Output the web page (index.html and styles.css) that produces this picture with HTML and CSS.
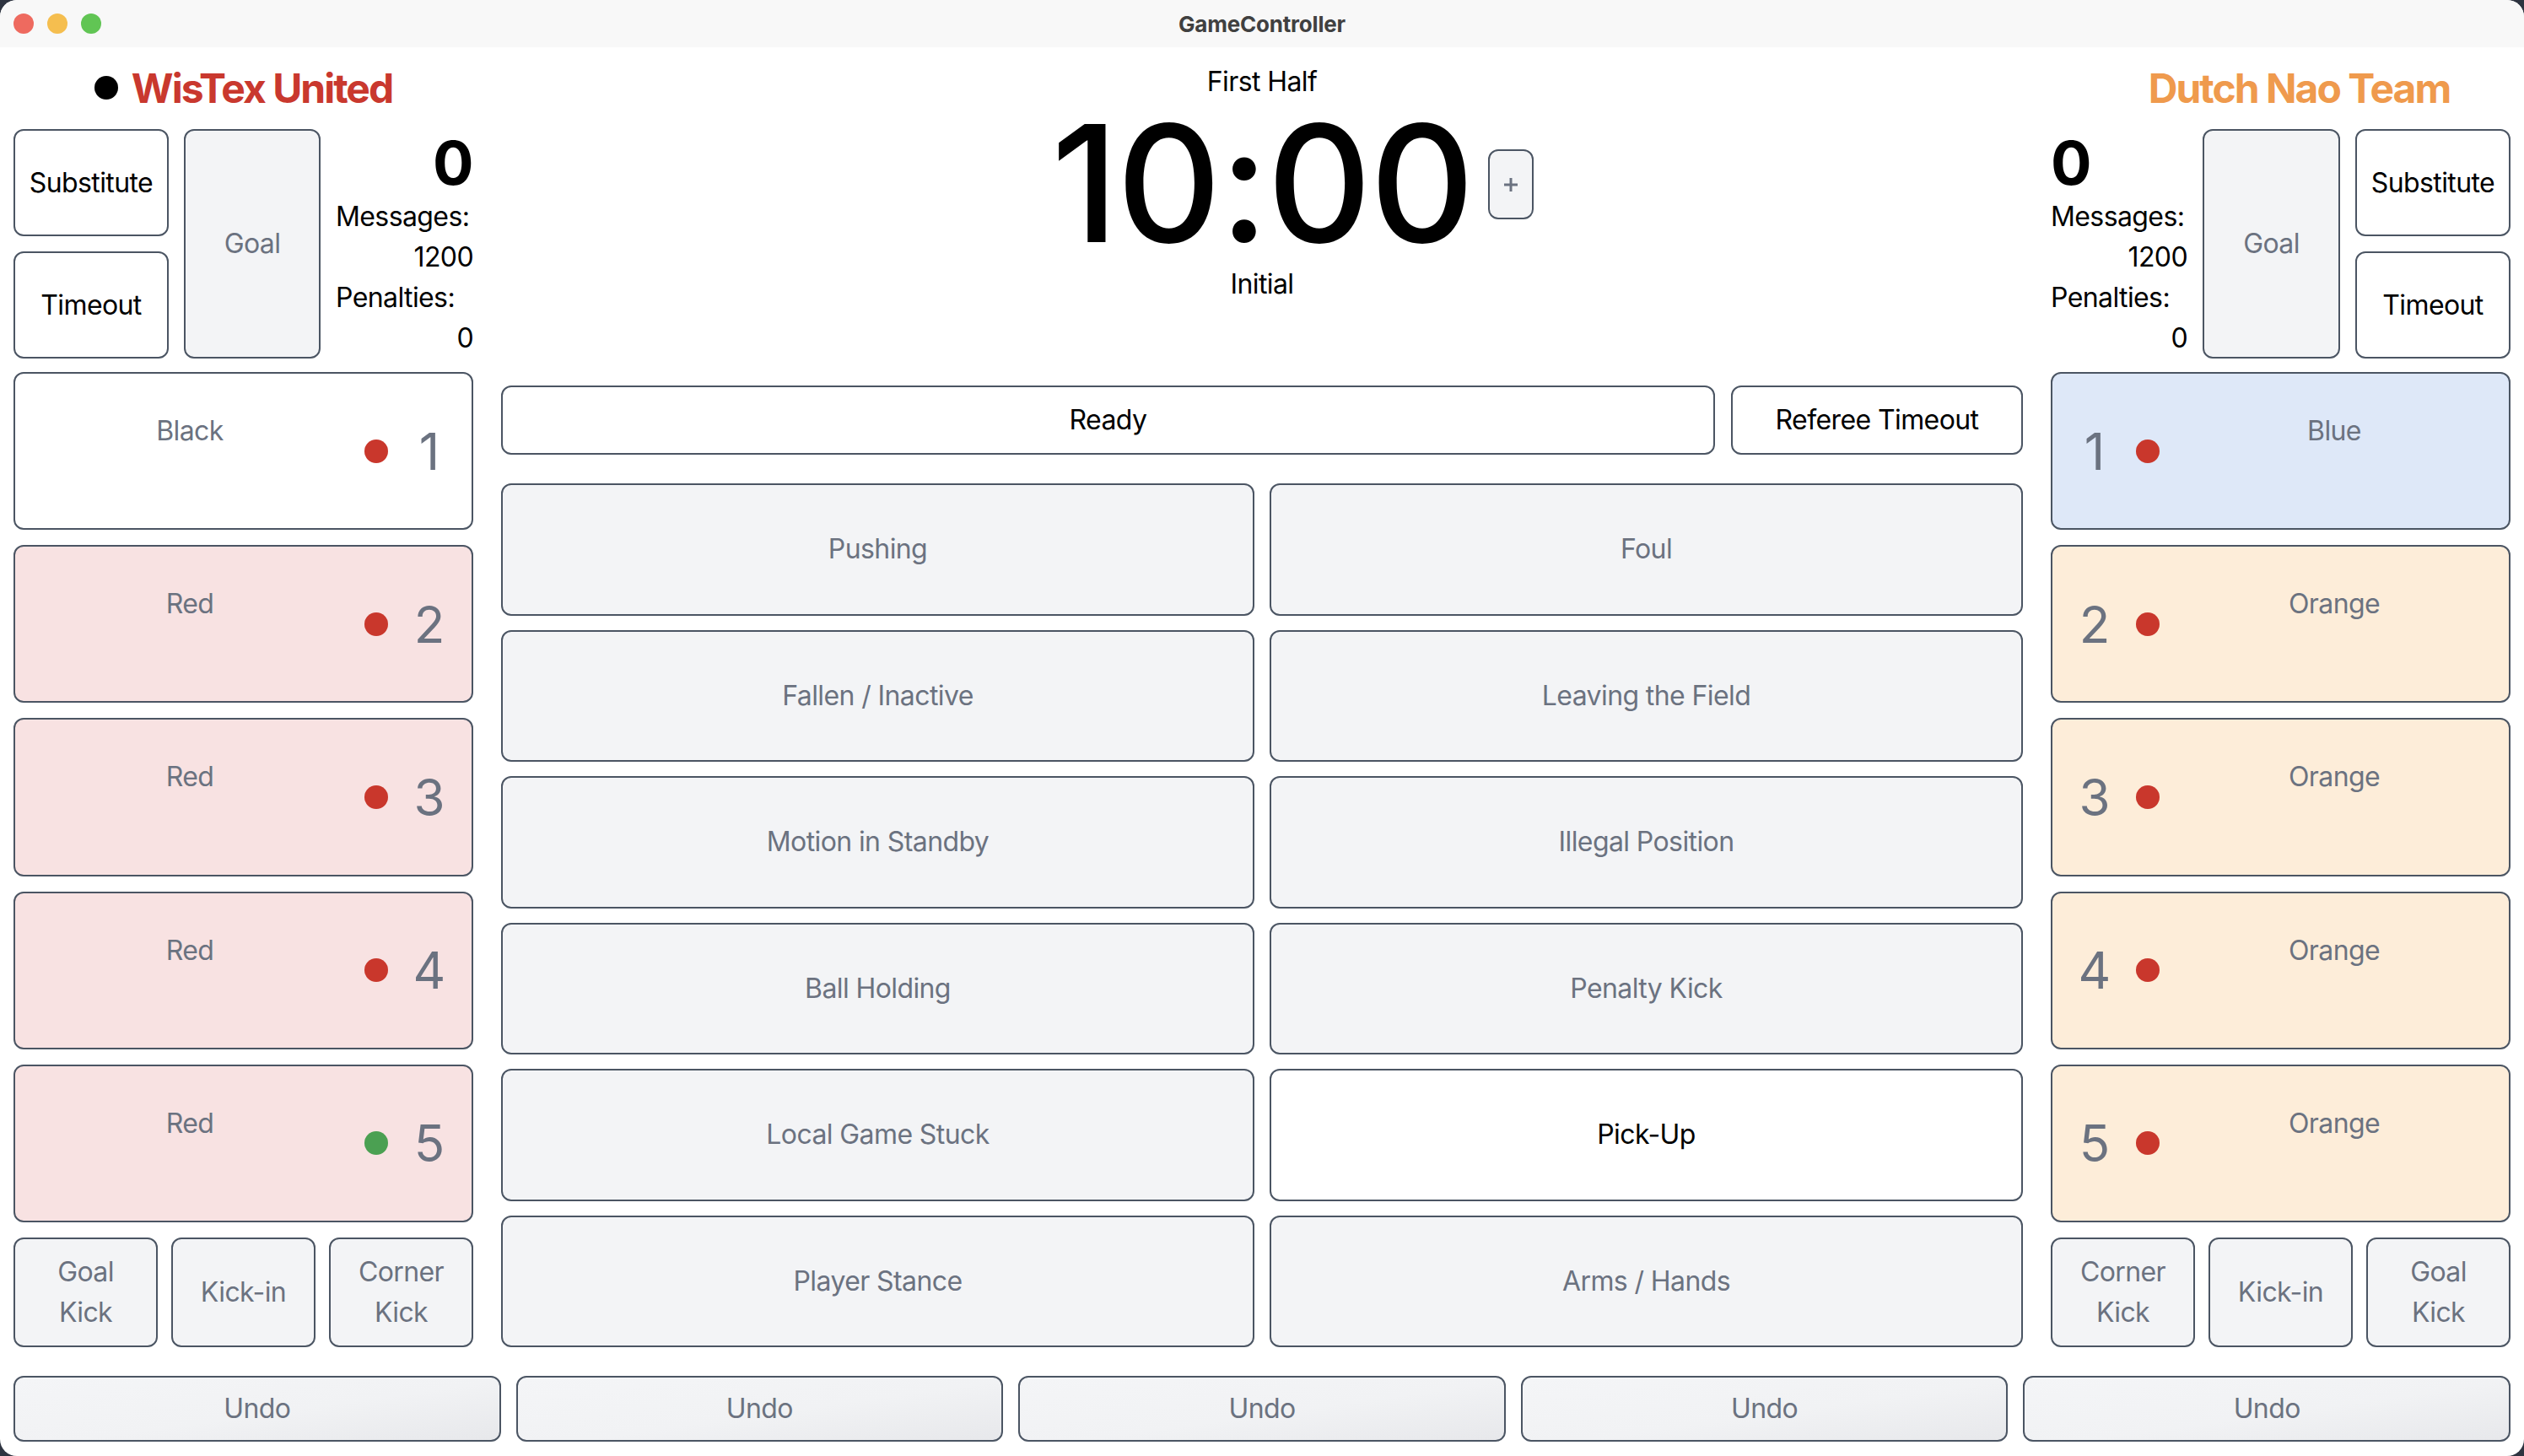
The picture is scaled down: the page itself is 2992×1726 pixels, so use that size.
FILE: index.html
```html
<!DOCTYPE html>
<html lang="en">
<head>
<meta charset="utf-8">
<title>GameController</title>
<link rel="stylesheet" href="styles.css">
</head>
<body>
<div class="window">
  <header class="titlebar">
    <div class="lights">
      <span class="light light-red"></span>
      <span class="light light-yellow"></span>
      <span class="light light-green"></span>
    </div>
    <div class="title">GameController</div>
    <div></div>
  </header>

  <main class="main">
    <div class="columns">
      <!-- Left team -->
      <section class="side side-left">
        <div class="team-name">
          <span class="kick-dot"></span>
          <span class="team-red">WisTex United</span>
        </div>
        <div class="team-head">
          <div class="stack">
            <button class="btn on">Substitute</button>
            <button class="btn on">Timeout</button>
          </div>
          <button class="btn">Goal</button>
          <div class="stats">
            <div class="score">0</div>
            <div>Messages:</div>
            <div class="val">1200</div>
            <div>Penalties:</div>
            <div class="val">0</div>
          </div>
        </div>
        <button class="card card-white"><span class="pname">Black</span><span class="pdot dot-red"></span><span class="pnum">1</span></button>
        <button class="card card-red"><span class="pname">Red</span><span class="pdot dot-red"></span><span class="pnum">2</span></button>
        <button class="card card-red"><span class="pname">Red</span><span class="pdot dot-red"></span><span class="pnum">3</span></button>
        <button class="card card-red"><span class="pname">Red</span><span class="pdot dot-red"></span><span class="pnum">4</span></button>
        <button class="card card-red"><span class="pname">Red</span><span class="pdot dot-green"></span><span class="pnum">5</span></button>
        <div class="kicks">
          <button class="btn">Goal Kick</button>
          <button class="btn">Kick-in</button>
          <button class="btn">Corner Kick</button>
        </div>
      </section>

      <!-- Center -->
      <section class="center">
        <div class="center-head">
          <div class="half">First Half</div>
          <div class="clock">10:00<button class="plus" aria-label="add time"><svg width="20" height="20" viewBox="0 0 20 20"><path d="M10 2v16M2 10h16" stroke="#6b7280" stroke-width="3" fill="none"/></svg></button></div>
          <div class="state">Initial</div>
        </div>
        <div class="ready-row">
          <button class="btn on ready">Ready</button>
          <button class="btn on ref-timeout">Referee Timeout</button>
        </div>
        <div class="fouls">
          <button class="btn">Pushing</button>
          <button class="btn">Foul</button>
          <button class="btn">Fallen / Inactive</button>
          <button class="btn">Leaving the Field</button>
          <button class="btn">Motion in Standby</button>
          <button class="btn">Illegal Position</button>
          <button class="btn">Ball Holding</button>
          <button class="btn">Penalty Kick</button>
          <button class="btn">Local Game Stuck</button>
          <button class="btn on">Pick-Up</button>
          <button class="btn">Player Stance</button>
          <button class="btn">Arms / Hands</button>
        </div>
      </section>

      <!-- Right team -->
      <section class="side side-right">
        <div class="team-name">
          <span class="kick-dot hidden"></span>
          <span class="team-orange">Dutch Nao Team</span>
        </div>
        <div class="team-head">
          <div class="stats">
            <div class="score">0</div>
            <div>Messages:</div>
            <div class="val">1200</div>
            <div>Penalties:</div>
            <div class="val">0</div>
          </div>
          <button class="btn">Goal</button>
          <div class="stack">
            <button class="btn on">Substitute</button>
            <button class="btn on">Timeout</button>
          </div>
        </div>
        <button class="card card-blue"><span class="pname">Blue</span><span class="pdot dot-red"></span><span class="pnum">1</span></button>
        <button class="card card-orange"><span class="pname">Orange</span><span class="pdot dot-red"></span><span class="pnum">2</span></button>
        <button class="card card-orange"><span class="pname">Orange</span><span class="pdot dot-red"></span><span class="pnum">3</span></button>
        <button class="card card-orange"><span class="pname">Orange</span><span class="pdot dot-red"></span><span class="pnum">4</span></button>
        <button class="card card-orange"><span class="pname">Orange</span><span class="pdot dot-red"></span><span class="pnum">5</span></button>
        <div class="kicks">
          <button class="btn">Corner Kick</button>
          <button class="btn">Kick-in</button>
          <button class="btn">Goal Kick</button>
        </div>
      </section>
    </div>

    <div class="undo-row">
      <button class="btn undo">Undo</button>
      <button class="btn undo">Undo</button>
      <button class="btn undo">Undo</button>
      <button class="btn undo">Undo</button>
      <button class="btn undo">Undo</button>
    </div>
  </main>
</div>
</body>
</html>
```

FILE: styles.css
```css
* {
  box-sizing: border-box;
  margin: 0;
  padding: 0;
}

html, body {
  width: 2992px;
  height: 1726px;
  overflow: hidden;
}

body {
  background: #2e3440;
  font-family: Inter, "Noto Sans", sans-serif;
  color: #000;
  letter-spacing: -0.6px;
}

.window {
  width: 2992px;
  height: 1726px;
  background: #fff;
  border-radius: 20px;
  overflow: hidden;
  display: flex;
  flex-direction: column;
}

/* Title bar */
.titlebar {
  flex: none;
  height: 56px;
  background: #f8f8f8;
  display: grid;
  grid-template-columns: 1fr auto 1fr;
  align-items: center;
  padding: 0 16px;
}

.lights {
  display: flex;
  gap: 16px;
}

.light {
  width: 24px;
  height: 24px;
  border-radius: 50%;
}

.light-red { background: #ee6a5f; }
.light-yellow { background: #f5be4f; }
.light-green { background: #61c554; }

.title {
  font-size: 26px;
  font-weight: 700;
  color: #404040;
  letter-spacing: -0.2px;
}

/* Main area */
.main {
  flex: 1;
  min-height: 0;
  padding: 17px 16px 17px;
  display: flex;
  flex-direction: column;
  gap: 34px;
}

.columns {
  flex: 1;
  min-height: 0;
  display: flex;
  gap: 33px;
}

.side {
  flex: none;
  width: 545px;
  display: flex;
  flex-direction: column;
  gap: 18px;
}

.center {
  flex: 1;
  min-width: 0;
  display: flex;
  flex-direction: column;
}

/* Buttons */
button {
  font-family: inherit;
  letter-spacing: inherit;
}

.btn {
  font-size: 32px;
  line-height: 48px;
  border: 2px solid #4b5563;
  border-radius: 12px;
  background: #f3f4f6;
  color: #6b7280;
  display: flex;
  align-items: center;
  justify-content: center;
  text-align: center;
}

.btn.on {
  background: #fff;
  color: #000;
}

/* Team name */
.team-name {
  flex: none;
  height: 62px;
  display: flex;
  align-items: center;
  justify-content: center;
  gap: 16px;
  font-size: 48px;
  font-weight: 700;
  letter-spacing: -2px;
}

.kick-dot {
  width: 28px;
  height: 28px;
  border-radius: 50%;
  background: #000;
}

.kick-dot.hidden {
  visibility: hidden;
}

.team-red { color: #c9382e; }
.team-orange { color: #ef9a4d; }

/* Team head */
.team-head {
  flex: none;
  height: 270px;
  display: grid;
  gap: 18px;
}

.side-left .team-head {
  grid-template-columns: 184px 162px 1fr;
}

.side-right .team-head {
  grid-template-columns: 1fr 163px 184px;
}

.stack {
  display: grid;
  grid-template-rows: 1fr 1fr;
  gap: 18px;
}

.stats {
  display: flex;
  flex-direction: column;
  font-size: 32px;
  line-height: 48px;
}

.score {
  font-size: 72px;
  line-height: 80px;
  font-weight: 700;
}

.side-left .score { text-align: right; }
.side-right .score { text-align: left; }

.val {
  text-align: right;
}

/* Player cards */
.card {
  flex: 1;
  min-height: 0;
  display: flex;
  align-items: center;
  border: 2px solid #4b5563;
  border-radius: 12px;
  padding: 0 25px 0 0;
  background: #fff;
}

.side-right .card {
  flex-direction: row-reverse;
  padding: 0 0 0 25px;
}

.card-white { background: #fff; }
.card-red { background: #f8e2e2; }
.card-blue { background: #dee8f8; }
.card-orange { background: #fdedd9; }

.pname {
  flex: 1;
  align-self: flex-start;
  padding-top: 44px;
  text-align: center;
  font-size: 32px;
  line-height: 48px;
  color: #6b7280;
}

.pdot {
  flex: none;
  width: 28px;
  height: 28px;
  border-radius: 50%;
  margin-right: 24px;
}

.side-right .pdot {
  margin-right: 0;
  margin-left: 24px;
}

.dot-red { background: #c9372c; }
.dot-green { background: #4ba052; }

.pnum {
  flex: none;
  width: 50px;
  text-align: center;
  font-size: 60px;
  line-height: 1;
  color: #6b7280;
  letter-spacing: 0;
}

/* Set-play buttons */
.kicks {
  flex: none;
  height: 130px;
  display: grid;
  grid-template-columns: repeat(3, 1fr);
  gap: 16px;
}

.kicks .btn {
  padding: 0 20px;
}

/* Center header */
.center-head {
  flex: none;
  height: 384px;
  display: flex;
  flex-direction: column;
  align-items: center;
}

.half {
  font-size: 32px;
  line-height: 48px;
}

.clock {
  position: relative;
  font-size: 192px;
  line-height: 192px;
  font-weight: 500;
  letter-spacing: -2px;
}

.plus {
  position: absolute;
  left: calc(100% + 18px);
  top: 56px;
  width: 54px;
  height: 83px;
  border: 2px solid #4b5563;
  border-radius: 12px;
  background: #f3f4f6;
  display: flex;
  align-items: center;
  justify-content: center;
}

.state {
  font-size: 32px;
  line-height: 48px;
}

/* Ready row */
.ready-row {
  flex: none;
  height: 82px;
  display: flex;
  gap: 19px;
}

.ready {
  flex: 1;
}

.ref-timeout {
  flex: none;
  width: 346px;
}

/* Foul grid */
.fouls {
  flex: 1;
  min-height: 0;
  margin-top: 34px;
  display: grid;
  grid-template-columns: 1fr 1fr;
  grid-template-rows: repeat(6, 1fr);
  column-gap: 18px;
  row-gap: 17px;
}

/* Undo row */
.undo-row {
  flex: none;
  height: 78px;
  display: grid;
  grid-template-columns: repeat(5, 1fr);
  gap: 18px;
}

.btn.undo {
  background: linear-gradient(172deg, #f4f5f7 0%, #f1f2f4 55%, #e7e8eb 100%);
}
```
